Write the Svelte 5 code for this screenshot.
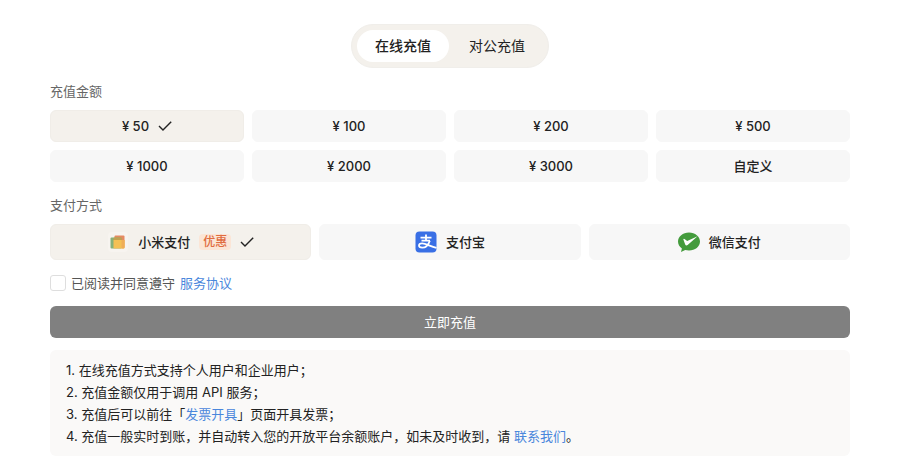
<script>
  let tab = 'online';
  let amount = '¥ 50';
  let method = 'mi';
  let agreed = false;

  const tabs = [
    { id: 'online', name: '在线充值' },
    { id: 'corporate', name: '对公充值' }
  ];

  const amounts = ['¥ 50', '¥ 100', '¥ 200', '¥ 500', '¥ 1000', '¥ 2000', '¥ 3000', '自定义'];

  const methods = [
    { id: 'mi', name: '小米支付', badge: '优惠' },
    { id: 'alipay', name: '支付宝' },
    { id: 'wechat', name: '微信支付' }
  ];
</script>

{#snippet check()}
  <svg class="check" viewBox="0 0 14 14" aria-hidden="true">
    <path d="M1 7 L5 11 L13.200 2.800" fill="none" stroke="#222" stroke-width="1.4" />
  </svg>
{/snippet}

<main>
  <div class="tabs" role="tablist">
    {#each tabs as item}
      <button
        role="tab"
        class:active={tab === item.id}
        aria-selected={tab === item.id}
        on:click={() => (tab = item.id)}
      >{item.name}</button>
    {/each}
  </div>

  <h3 id="amount-title">充值金额</h3>
  <div class="amounts" role="group" aria-labelledby="amount-title">
    {#each amounts as item}
      <button
        class="option"
        class:selected={amount === item}
        aria-pressed={amount === item}
        on:click={() => (amount = item)}
      >
        <span>{item}</span>
        {#if amount === item}{@render check()}{/if}
      </button>
    {/each}
  </div>

  <h3 id="method-title">支付方式</h3>
  <div class="methods" role="group" aria-labelledby="method-title">
    {#each methods as item}
      <button
        class="option"
        class:selected={method === item.id}
        aria-pressed={method === item.id}
        on:click={() => (method = item.id)}
      >
        {#if item.id === 'mi'}
          <svg class="logo" viewBox="0 0 22 22" aria-hidden="true">
            <rect x="1" y="1" width="20" height="20" rx="4" fill="#f7f4f0" />
            <rect x="7.500" y="4.500" width="10" height="12.500" rx="1" fill="#e58a62" />
            <rect x="3.500" y="6.500" width="11" height="11" rx="1" fill="#86b078" />
            <path d="M6.500 9h8V6.500H7.500q-1 0-1 1z" fill="#c3a04e" />
            <path d="M6.500 9h11v7.500q0 1-1 1h-10z" fill="#f3c054" />
            <path d="M14.500 9h3v7.500q0 1-1 1h-2z" fill="#efae58" />
          </svg>
        {:else if item.id === 'alipay'}
          <svg class="logo" viewBox="0 0 22 22" aria-hidden="true">
            <rect x="0.500" y="0.500" width="21" height="21" rx="4" fill="#396fe5" />
            <g fill="none" stroke="#fff" stroke-width="1.800">
              <path d="M5.500 6.600h11M11 3.600v6M6.500 9.700h8.500" />
              <path d="M14.800 9.700c-1.200 3.700-4.100 7-7.600 7-2.100 0-3.200-.9-3.200-2.100 0-1.300 1.200-2.200 3.100-2.200 3.700 0 7.400 2.600 14.400 4.500" />
            </g>
          </svg>
        {:else}
          <svg class="logo" viewBox="0 0 22 22" aria-hidden="true">
            <path d="M11 1.500C4.900 1.500 0 5.500 0 10.500c0 2.900 1.500 5.200 3.900 6.900l-.9 3.600 4.200-2c1.200.3 2.500.5 3.800.5 6.100 0 11-4 11-9s-4.900-9-11-9z" fill="#439b3c" />
            <path d="M5.300 8.200q.5-.6 1.200-.1l2.700 2L19.600 5.200 9.600 14.100c-1 .8-1.900.6-2.400-.6z" fill="#fff" />
          </svg>
        {/if}
        <span>{item.name}</span>
        {#if item.badge}<em>{item.badge}</em>{/if}
        {#if method === item.id}{@render check()}{/if}
      </button>
    {/each}
  </div>

  <div class="agreement">
    <input type="checkbox" id="agree" bind:checked={agreed} />
    <label for="agree">已阅读并同意遵守</label>
    <a href="#terms">服务协议</a>
  </div>

  <button class="submit">立即充值</button>

  <div class="notes">
    <p>1. 在线充值方式支持个人用户和企业用户；</p>
    <p>2. 充值金额仅用于调用 API 服务；</p>
    <p>3. 充值后可以前往「<a href="#invoice">发票开具</a>」页面开具发票；</p>
    <p>4. 充值一般实时到账，并自动转入您的开放平台余额账户，如未及时收到，请 <a href="#contact">联系我们</a>。</p>
  </div>
</main>

<style>
  :global(body) {
    background: #fff;
  }

  main {
    display: flex;
    flex-direction: column;
    padding: 24px 50px 4px;
    font-family: Inter, "Noto Sans CJK SC", sans-serif;
    font-size: 13px;
    line-height: 18px;
    color: #222;
  }

  button {
    border: 0;
    padding: 0;
    font: inherit;
    color: inherit;
    cursor: pointer;
  }

  a {
    color: #4a87dc;
    text-decoration: none;
  }

  .tabs {
    display: flex;
    align-self: center;
    gap: 2px;
    padding: 5px;
    border: 1px solid #f0eeea;
    border-radius: 22px;
    background: #f4f1ec;
  }

  .tabs button {
    height: 32px;
    padding: 0 18px;
    border-radius: 16px;
    background: transparent;
    font-size: 14px;
  }

  .tabs .active {
    background: #fff;
    font-weight: 500;
  }

  h3 {
    margin: 14px 0 10px;
    font-size: 13px;
    font-weight: 400;
    color: #666;
  }

  .amounts,
  .methods {
    display: grid;
    gap: 8px;
  }

  .amounts {
    grid-template-columns: repeat(4, 1fr);
  }

  .methods {
    grid-template-columns: repeat(3, 1fr);
  }

  .option {
    display: flex;
    justify-content: center;
    align-items: center;
    gap: 9px;
    height: 32px;
    border: 1px solid #f7f7f7;
    border-radius: 6px;
    background: #f7f7f7;
    font-weight: 500;
  }

  .methods .option {
    height: 36px;
  }

  .option.selected {
    border-color: #f0ede8;
    background: #f4f1ec;
  }

  .check {
    width: 14px;
    height: 14px;
  }

  .logo {
    width: 22px;
    height: 22px;
  }

  em {
    padding: 0 4px;
    border-radius: 4px;
    background: #fbe5d6;
    font-size: 12px;
    font-style: normal;
    line-height: 16px;
    color: #e06c40;
  }

  .agreement {
    display: flex;
    align-items: center;
    gap: 5px;
    margin: 14px 0;
    color: #555;
  }

  .agreement input {
    appearance: none;
    width: 16px;
    height: 16px;
    margin: 0;
    border: 1px solid #dedede;
    border-radius: 3px;
    background: #fff;
  }

  .agreement input:checked {
    background: #4a87dc;
  }

  .submit {
    height: 32px;
    border-radius: 6px;
    background: #808080;
    color: #fff;
  }

  .notes {
    margin-top: 12px;
    padding: 9px 16px;
    border-radius: 6px;
    background: #faf9f8;
    line-height: 22px;
  }

  .notes p {
    margin: 0;
  }
</style>
